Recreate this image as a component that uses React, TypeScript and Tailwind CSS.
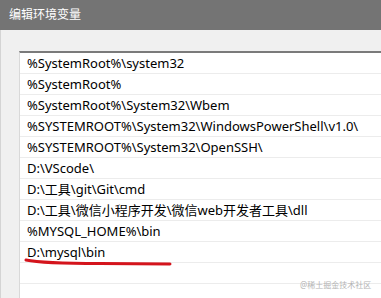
const paths = [
  '%SystemRoot%\\system32',
  '%SystemRoot%',
  '%SystemRoot%\\System32\\Wbem',
  '%SYSTEMROOT%\\System32\\WindowsPowerShell\\v1.0\\',
  '%SYSTEMROOT%\\System32\\OpenSSH\\',
  'D:\\VScode\\',
  'D:\\工具\\git\\Git\\cmd',
  'D:\\工具\\微信小程序开发\\微信web开发者工具\\dll',
  '%MYSQL_HOME%\\bin',
  'D:\\mysql\\bin',
  '',
  '',
]

const font = { fontFamily: '"Noto Sans", "Noto Sans CJK SC", sans-serif' }

export default function App() {
  return (
    <div className="relative flex h-[298px] w-[381px] flex-col overflow-hidden bg-[#f0f0f0]" style={font}>
      <div className="flex h-[30px] shrink-0 items-center bg-[#747474] pl-[9px] text-[12px] text-white">
        编辑环境变量
      </div>
      <div className="flex flex-1 border-l border-[#d4d4d4] pl-[18px] pt-[21px]">
        <div className="flex-1 border-l border-t-2 border-l-[#d9d9d9] border-t-[#7a7a7a] bg-white">
          {paths.map((p, i) => (
            <div
              key={i}
              className="flex h-[21px] items-center border-b border-[#ececec] pl-[7px] text-[13px] leading-none text-black"
            >
              {p}
            </div>
          ))}
        </div>
      </div>

      <svg className="absolute left-0 top-0" width="381" height="298" viewBox="0 0 381 298">
        <path
          d="M26 260 C 40 263, 70 263.5, 100 263.5 S 150 264, 170 264"
          fill="none"
          stroke="#d4141c"
          strokeWidth="3"
          strokeLinecap="round"
        />
      </svg>

      <div className="absolute left-[300px] top-[281px] whitespace-nowrap text-[8px] leading-none text-[#b4b4b4]">
        @稀土掘金技术社区
      </div>
    </div>
  )
}
